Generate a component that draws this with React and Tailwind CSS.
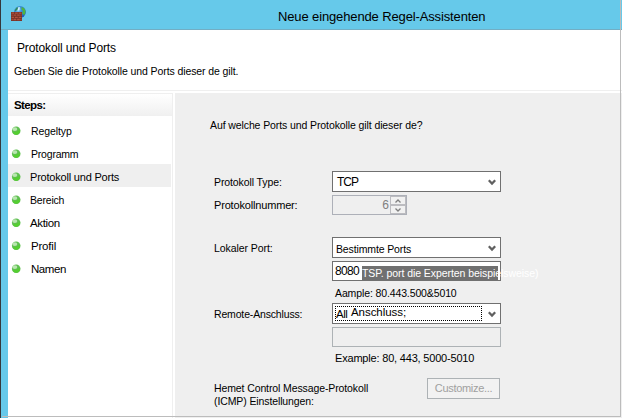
import React from "react";

const steps = [
  { name: "Regeltyp", cls: "pt-[3px] pl-[10px] text-[10.5px] tracking-[-0.1px]" },
  { name: "Programm", cls: "pt-[3px] pl-[10px] text-[10.5px] tracking-[-0.2px]" },
  { name: "Protokoll und Ports", cls: "pt-[3px] pl-[9px] text-[11px] tracking-[-0.2px]", active: true },
  { name: "Bereich", cls: "pt-[4px] pl-[9px] text-[10.5px] tracking-[-0.2px]" },
  { name: "Aktion", cls: "pt-[4px] pl-[9px] text-[11.5px] tracking-[-0.35px]" },
  { name: "Profil", cls: "pt-[4px] pl-[10px] text-[11.5px] tracking-[-0.2px]" },
  { name: "Namen", cls: "pt-[4px] pl-[10px] text-[11.5px] tracking-[-0.45px]" },
];

function FirewallIcon() {
  return (
    <svg width="16" height="16" viewBox="0 0 16 16">
      <defs>
        <radialGradient id="globe" cx="0.35" cy="0.3" r="0.75">
          <stop offset="0" stopColor="#b5e6fb" />
          <stop offset="0.35" stopColor="#3f94dc" />
          <stop offset="1" stopColor="#1f57b5" />
        </radialGradient>
      </defs>
      <circle cx="9.900" cy="6" r="5.900" fill="url(#globe)" />
      <path d="M11.500 1c1.800.3 3.200 1.500 3.700 3.100.5 1.700.3 3.300-.6 4.700l-1.700-.4-.6-2.200 1-1.500-1.700-1z" fill="#4fb63e" />
      <path d="M4.600 4.300 6.800 1.300l1.400.1-1 2.500-1.800 1.400z" fill="#2f8a5c" />
      <path d="M8.200 1.500 9.800 1 9.400 3.800 8.200 4.500z" fill="#d8f5ff" />
      <rect x="1" y="6" width="11" height="9" fill="#753026" />
      <g fill="#b0523f">
        <path d="M1.500 6.500H4v1.200H1.500zM4.800 6.500h3v1.200h-3zM8.600 6.500h2.900v1.200H8.600z" />
        <path d="M1.500 8.600h1.200v1.200H1.500zM3.500 8.600h2.800v1.200H3.500zM7.100 8.600h2.700v1.200H7.100zM10.500 8.600h1v1.200h-1z" />
        <path d="M1.500 10.700H4v1.200H1.500zM4.800 10.700h3v1.200h-3zM8.600 10.700h2.900v1.200H8.600z" />
        <path d="M1.500 12.800h1.200v1.400H1.500zM3.500 12.800h2.800v1.400H3.500zM7.100 12.800h2.700v1.400H7.100zM10.500 12.800h1v1.400h-1z" />
      </g>
    </svg>
  );
}

function Bullet() {
  return (
    <svg className="mt-[2px] shrink-0" width="10" height="10" viewBox="0 0 10 10">
      <circle cx="5.200" cy="4.800" r="4.300" fill="#5fbf50" />
      <path d="M1.800 6.500a3.800 3.800 0 0 0 7 0L9.100 4 5.500 5.500z" fill="#55ce31" />
      <ellipse cx="3.800" cy="3.100" rx="2.500" ry="1.900" fill="#b9e6b0" />
    </svg>
  );
}

function Chevron() {
  return (
    <svg className="mt-px" width="8" height="7" viewBox="0 0 8 7" fill="none" stroke="#606060" strokeWidth="2.200">
      <path d="M.8 1.200 4 4.600l3.200-3.400" />
    </svg>
  );
}

function SpinArrow({ up }) {
  return (
    <div className="flex h-[9px] w-4 items-center justify-center border border-[#bcbcc0] bg-[#f1f1f1]">
      <svg width="6" height="4" viewBox="0 0 6 4" fill="none" stroke="#808080" strokeWidth="1.300">
        <path d={up ? "M.5 3.500 3 1l2.500 2.500" : "M.5.5 3 3 5.500.5"} />
      </svg>
    </div>
  );
}

function Select({ children }) {
  return (
    <div className="flex h-[21px] w-[169px] items-center justify-between border border-[#707070] bg-white pr-1">
      {children}
      <Chevron />
    </div>
  );
}

function Label({ className = "", children }) {
  return <div className={`w-[118px] shrink-0 text-[10.5px] ${className}`}>{children}</div>;
}

export default function App() {
  return (
    <div className="flex h-[418px] w-[622px] overflow-hidden bg-white font-['Liberation_Sans',Arial,sans-serif] leading-none whitespace-nowrap text-black">
      <div className="w-[1px] bg-[#35383c]" />
      <div className="relative flex h-full w-[621px] flex-col">
        <header className="flex h-[30px] shrink-0 border-b border-[#72aec4] bg-[#66c9ea] pt-[5px]">
          <div className="w-[277px] pt-px pl-[9px]">
            <FirewallIcon />
          </div>
          <h1 className="h-[23px] text-[13px] leading-[23px] tracking-[-0.13px]">Neue eingehende Regel-Assistenten</h1>
        </header>

        <div className="flex min-h-0 grow">
          <div className="w-[7px] shrink-0 bg-[#66c9ea]" />
          <div className="flex grow flex-col">
            <section className="h-[61px] shrink-0 border-b border-[#efefef]">
              <h2 className="mt-[11px] pl-[9px] text-[12px] leading-[14px] tracking-[-0.13px]">Protokoll und Ports</h2>
              <p className="mt-[10px] pl-[6px] text-[10.5px] leading-[13px] tracking-[-0.1px]">
                Geben Sie die Protokolle und Ports dieser de gilt.
              </p>
            </section>

            <div className="mt-[2px] flex min-h-0 grow">
              <nav className="w-[165px] shrink-0 border-t border-r border-[#efefef]">
                <div className="h-[22px] bg-linear-to-b from-white to-[#f0f0f0] pl-[6px] text-[11.5px] leading-[22px] font-bold tracking-[-0.6px]">
                  Steps:
                </div>
                <ul className="pt-[2px]">
                  {steps.map((step) => (
                    <li
                      key={step.name}
                      className={`mr-px flex h-[23px] items-center pl-[3px] ${step.active ? "bg-[#efefef]" : ""}`}
                    >
                      <Bullet />
                      <span className={step.cls}>{step.name}</span>
                    </li>
                  ))}
                </ul>
              </nav>

              <main className="ml-[2px] flex grow flex-col bg-[#efefef] pl-[39px]">
                <p className="-ml-1 mt-[26px] h-[13px] text-[10.5px] leading-[13px] tracking-[-0.1px]">
                  Auf welche Ports und Protokolle gilt dieser de?
                </p>

                <div className="mt-[39px] flex h-[21px] items-center">
                  <Label className="pt-[2px] tracking-[-0.1px]">Protokoll Type:</Label>
                  <Select>
                    <span className="pl-1 text-[12px] tracking-[-1px]">TCP</span>
                  </Select>
                </div>
                <div className="mt-[3px] flex h-5 items-center">
                  <div className="w-[118px] text-[11px] tracking-[-0.17px]">Protokollnummer:</div>
                  <div className="flex h-5 w-[75px] items-center justify-end border border-[#adb0b8] text-[12px] text-[#808080]">
                    <span className="pr-px pb-px">6</span>
                    <div className="flex flex-col">
                      <SpinArrow up />
                      <SpinArrow />
                    </div>
                  </div>
                </div>

                <div className="mt-[22px] flex h-[21px] items-center">
                  <Label className="pt-[2px] tracking-[-0.07px]">Lokaler Port:</Label>
                  <Select>
                    <span className="pt-[3px] pl-[3px] text-[10.5px] tracking-[-0.13px]">Bestimmte Ports</span>
                  </Select>
                </div>
                <div className="mt-[3px] ml-[118px] flex h-5 w-[169px] items-center border border-[#707070] bg-white">
                  <span className="w-[29px] shrink-0 pl-[2px] text-[12px] tracking-[-0.65px]">8080</span>
                  <span className="mt-[3px] h-[14px] w-[136px] shrink-0 bg-[#707070] text-[10.5px] leading-[14px] tracking-[-0.07px] text-white">
                    TSP. port die Experten beispielsweise)
                  </span>
                </div>
                <div className="mt-[6px] ml-[121px] h-[13px] text-[10.5px] leading-[13px] tracking-[-0.12px]">
                  Aample: 80.443.500&amp;5010
                </div>

                <div className="mt-[3px] flex h-[21px] items-center">
                  <Label className="pt-[2px] tracking-[-0.16px]">Remote-Anschluss:</Label>
                  <Select>
                    <span className="ml-[2px] flex h-[15px] w-[147px] border border-dotted border-black">
                      <span className="w-[15px] pt-[2px] text-[11.5px] tracking-[-0.5px]">All</span>
                      <span className="text-[11.5px] tracking-[-0.05px]">Anschluss;</span>
                    </span>
                  </Select>
                </div>
                <div className="mt-[3px] ml-[118px] h-5 w-[169px] border border-[#adb2b5]" />
                <div className="mt-1 ml-[121px] h-[14px] text-[11px] leading-[14px] tracking-[-0.19px]">
                  Example: 80, 443, 5000-5010
                </div>

                <div className="mt-[13px] flex">
                  <div className="mt-1 w-[213px] text-[10.5px] leading-[13px] tracking-[-0.11px]">
                    Hemet Control Message-Protokoll
                    <br />
                    (ICMP) Einstellungen:
                  </div>
                  <button className="h-[21px] w-[73px] border border-[#adb2b5] bg-[#f2f2f2] text-[11px] leading-[19px] tracking-[-0.3px] text-[#a0a0a0]">
                    Customize...
                  </button>
                </div>
              </main>
            </div>
          </div>
        </div>
        {/* window frame edge drawn above the panels */}
        <div className="pointer-events-none absolute top-0 right-px bottom-px left-px border-r border-b border-[#bcbcbc]" />
      </div>
    </div>
  );
}
